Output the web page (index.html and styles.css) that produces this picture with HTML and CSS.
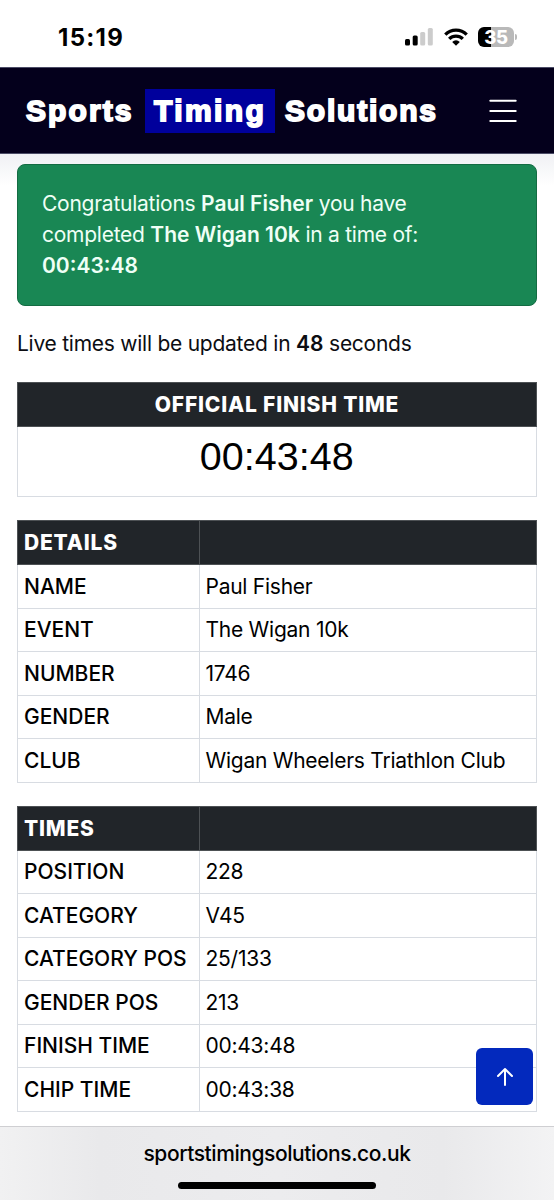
FILE: index.html
```html
<!DOCTYPE html>
<html lang="en">
<head>
    <meta charset="utf-8">
    <title>Sports Timing Solutions</title>
    <link rel="stylesheet" href="styles.css">
</head>
<body>
    <div class="status-bar">
        <span class="clock">15:19</span>
        <div class="status-icons">
            <svg class="signal" width="28" height="18" viewBox="0 0 28 18">
                <rect x="0" y="11" width="5" height="6.5" rx="1.5" fill="#000"/>
                <rect x="7.7" y="7.5" width="5" height="10" rx="1.5" fill="#000"/>
                <rect x="15.2" y="4" width="5" height="13.5" rx="1.5" fill="#ccc"/>
                <rect x="22.8" y="0" width="5" height="17.5" rx="1.5" fill="#ccc"/>
            </svg>
            <svg class="wifi" width="24" height="18" viewBox="0 0 24 18">
                <g fill="none" stroke="#000" stroke-width="3.3">
                    <path d="M1.3 6.6a15.1 15.1 0 0 1 21.4 0"/>
                    <path d="M5.2 10.9a9.6 9.6 0 0 1 13.6 0"/>
                </g>
                <path d="M12 17.8l-3.8-3.9a5.4 5.4 0 0 1 7.6 0z" fill="#000"/>
            </svg>
            <div class="battery"><span>35</span></div>
            <div class="battery-tip"></div>
        </div>
    </div>

    <header class="navbar">
        <div class="logo">
            <span class="sports">Sports</span>
            <span class="timing">Timing</span>
            <span class="solutions">Solutions</span>
        </div>
        <svg class="menu" width="28" height="24" viewBox="0 0 28 24" stroke="#fff" stroke-width="2" stroke-linecap="round">
            <path d="M1.3 1.8h25.4M1.3 12h25.4M1.3 22h25.4"/>
        </svg>
    </header>

    <main>
        <div class="alert">
            <div>Congratulations <b>Paul Fisher</b> you have</div>
            <div>completed <b>The Wigan 10k</b> in a time of:</div>
            <div><b>00:43:48</b></div>
        </div>

        <p class="live">Live times will be updated in <b>48</b> seconds</p>

        <table class="finish">
            <thead>
                <tr><th>OFFICIAL FINISH TIME</th></tr>
            </thead>
            <tbody>
                <tr><td>00:43:48</td></tr>
            </tbody>
        </table>

        <table class="results">
            <thead>
                <tr><th>DETAILS</th><th></th></tr>
            </thead>
            <tbody>
                <tr><th>NAME</th><td>Paul Fisher</td></tr>
                <tr><th>EVENT</th><td>The Wigan 10k</td></tr>
                <tr><th>NUMBER</th><td>1746</td></tr>
                <tr><th>GENDER</th><td>Male</td></tr>
                <tr><th>CLUB</th><td>Wigan Wheelers Triathlon Club</td></tr>
            </tbody>
        </table>

        <table class="results">
            <thead>
                <tr><th>TIMES</th><th></th></tr>
            </thead>
            <tbody>
                <tr><th>POSITION</th><td>228</td></tr>
                <tr><th>CATEGORY</th><td>V45</td></tr>
                <tr><th>CATEGORY POS</th><td>25/133</td></tr>
                <tr><th>GENDER POS</th><td>213</td></tr>
                <tr><th>FINISH TIME</th><td>00:43:48</td></tr>
                <tr><th>CHIP TIME</th><td>00:43:38</td></tr>
            </tbody>
        </table>
    </main>

    <a class="back-to-top" href="#">
        <svg width="18" height="20" viewBox="0 0 18 20" fill="none" stroke="#fff" stroke-width="2" stroke-linecap="round" stroke-linejoin="round">
            <path d="M9 18V2M2 9l7-7 7 7"/>
        </svg>
    </a>

    <footer class="url-bar">
        <span>sportstimingsolutions.co.uk</span>
        <div class="home-indicator"></div>
    </footer>
</body>
</html>
```
FILE: styles.css
```css
* {
    box-sizing: border-box;
}

body {
    margin: 0;
    height: 1200px;
    overflow: hidden;
    display: flex;
    flex-direction: column;
    background: #fff;
    color: #0c0d12;
    font-family: Inter, "Liberation Sans", sans-serif;
    font-size: 21px;
    letter-spacing: -0.25px;
}

b {
    font-weight: 600;
    letter-spacing: 0;
}

/* phone status bar */
.status-bar {
    flex: none;
    height: 67px;
    padding: 7px 37px 0 58px;
    display: flex;
    justify-content: space-between;
    align-items: center;
}
.clock {
    color: #000;
    font-size: 24px;
    font-weight: 700;
    letter-spacing: 1.3px;
}
.status-icons {
    display: flex;
    align-items: center;
}
.wifi {
    margin: 0 10px 0 11px;
}
.battery {
    width: 36px;
    height: 20px;
    border-radius: 6px;
    background: linear-gradient(to right, #000 35%, #b9b9b9 35%);
    color: #fff;
    font-size: 18.5px;
    font-weight: 800;
    line-height: 20px;
    text-align: center;
}
.battery-tip {
    width: 2px;
    height: 6px;
    margin-left: 1px;
    border-radius: 0 2px 2px 0;
    background: #b9b9b9;
}

.navbar {
    flex: none;
    height: 87px;
    padding: 0 37px 0 26px;
    display: flex;
    justify-content: space-between;
    align-items: center;
    background: #04001c;
    border-top: 1px solid #4b4c66;
    border-bottom: 1px solid #4b4c66;
}
.logo {
    display: flex;
    align-items: center;
    color: #fff;
    font: bold 30px "Liberation Sans", Arial, sans-serif;
    letter-spacing: 1.8px;
    -webkit-text-stroke: 1.8px #fff;
}
.logo .sports {
    width: 108px;
    letter-spacing: 2.1px;
}
.logo .timing {
    width: 130px;
    height: 44px;
    margin: 0 10px 0 11px;
    padding-left: 9px;
    line-height: 44px;
    letter-spacing: 2.4px;
    background: #00009c;
}

main {
    flex: none;
    height: 972px;
    padding: 10px 17px 0;
    background: linear-gradient(#f0f1f4, #fff 32px);
}

.alert {
    height: 142px;
    padding: 23px 24px;
    border: 1px solid #146c43;
    border-radius: 8px;
    background: #198754;
    color: #effff6;
    line-height: 31.2px;
}

.live {
    margin: 22px 0 23px;
    line-height: 31px;
}

table {
    width: 520px;
    border-collapse: collapse;
    table-layout: fixed;
    margin-bottom: 23px;
    color: #000;
}
th, td {
    height: 43.5px;
    padding: 0 6px;
    border: 1px solid #d8dce2;
    text-align: left;
    white-space: nowrap;
}
tbody th {
    font-weight: 550;
    letter-spacing: 0;
}
tbody td {
    padding-left: 5.5px;
}
thead th {
    height: 44px;
    background: #212529;
    border-color: #4d5154;
    color: #fff;
    font-weight: 850;
    letter-spacing: 0.8px;
}
.results th:first-child {
    width: 182px;
}
.finish th {
    text-align: center;
}
.finish td {
    height: 70px;
    padding-bottom: 11px;
    text-align: center;
    font-family: "Liberation Sans", Arial, sans-serif;
    font-size: 39.5px;
    letter-spacing: 0;
}

.back-to-top {
    position: absolute;
    left: 476px;
    top: 1048px;
    width: 57px;
    height: 57px;
    border-radius: 6px;
    display: flex;
    justify-content: center;
    align-items: center;
    background: #0329bd;
}

/* browser address bar */
.url-bar {
    flex: none;
    height: 74px;
    padding-top: 13px;
    display: flex;
    flex-direction: column;
    align-items: center;
    border-top: 1px solid #cfcfd2;
    background: linear-gradient(to right, #f1f1f2, #e9e9eb 18%, #ececee 50%, #e9e9eb 80%, #f3f3f4);
    color: #000;
    font-weight: 550;
    line-height: 28px;
    letter-spacing: -0.43px;
}
.home-indicator {
    width: 198px;
    height: 7px;
    margin-top: 14px;
    border-radius: 4px;
    background: #000;
}
```
